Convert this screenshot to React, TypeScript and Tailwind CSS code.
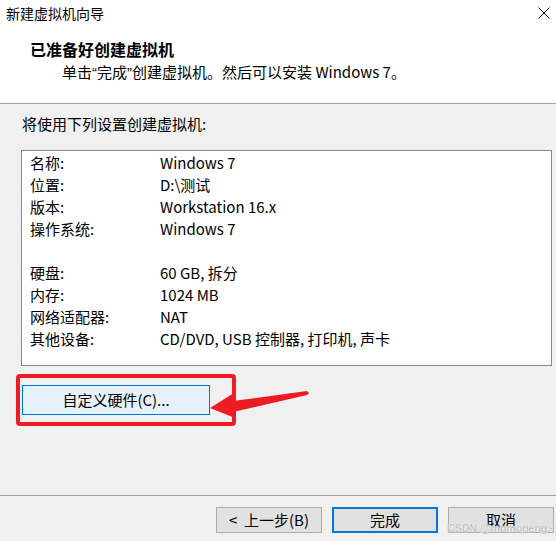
import React from 'react'

// ─── 数据 ─────────────────────────────────────────────────────────────────────

const ROWS: [string, string][] = [
  ['名称:', 'Windows 7'],
  ['位置:', 'D:\\测试'],
  ['版本:', 'Workstation 16.x'],
  ['操作系统:', 'Windows 7'],
  ['', ''],
  ['硬盘:', '60 GB, 拆分'],
  ['内存:', '1024 MB'],
  ['网络适配器:', 'NAT'],
  ['其他设备:', 'CD/DVD, USB 控制器, 打印机, 声卡'],
]

const Q = ({ c }: { c: string }) => <span className="font-['Liberation_Sans']">{c}</span>

// ─── App ──────────────────────────────────────────────────────────────────────

export default function App() {
  return (
    <div className="relative w-[556px] h-[541px] overflow-hidden bg-[#f0f0f0] text-black flex flex-col font-['Noto_Sans_CJK_SC',sans-serif]">
      {/* 头部 */}
      <div className="bg-white border-b border-[#a0a0a0] h-[104px] shrink-0 flex flex-col">
        <div className="h-[26px] flex items-center justify-between pl-[6px] pr-[6px]">
          <span className="text-[14px] leading-[20px]">新建虚拟机向导</span>
          <svg width="12" height="12" viewBox="0 0 12 12" className="text-black">
            <path d="M0.5 0.5 L11.5 11.5 M11.5 0.5 L0.5 11.5" stroke="currentColor" strokeWidth="1" fill="none" />
          </svg>
        </div>
        <div className="mt-[13px] pl-[30px] text-[16px] leading-[20px] font-bold">已准备好创建虚拟机</div>
        <div className="mt-[3px] pl-[62px] text-[15px] leading-[20px]">
          单击<Q c="“" />完成<Q c="”" />创建虚拟机。然后可以安装 Windows 7。
        </div>
      </div>

      {/* 内容 */}
      <div className="mt-[10px] pl-[22px] text-[15px] leading-[20px]">将使用下列设置创建虚拟机:</div>

      <div className="mt-[16px] ml-[21px] w-[531px] h-[216px] shrink-0 bg-white border border-[#828790] pt-[1px] pl-[8px]">
        {ROWS.map(([k, v], i) => (
          <div key={i} className="h-[22px] flex items-center text-[15px] leading-[22px]">
            <span className="w-[130px] shrink-0">{k}</span>
            <span>{v}</span>
          </div>
        ))}
      </div>

      <button
        type="button"
        className="mt-[19px] ml-[22px] w-[188px] h-[30px] shrink-0 bg-[#e5f1fb] border border-[#0078d7] text-[15px] leading-[20px] flex items-center justify-center"
      >
        自定义硬件(C)...
      </button>

      <div className="flex-1" />

      {/* 底部按钮 */}
      <div className="border-t border-[#a0a0a0] pt-[11px] pb-[8px] pr-[2px] flex justify-end gap-[10px] shrink-0">
        <button type="button" className="w-[106px] h-[26px] bg-[#e1e1e1] border border-[#adadad] text-[15px] leading-[20px] flex items-center justify-center whitespace-pre">
          {'<  上一步(B)'}
        </button>
        <button type="button" className="w-[106px] h-[26px] bg-[#e1e1e1] border-2 border-[#0078d7] text-[15px] leading-[20px] flex items-center justify-center">
          完成
        </button>
        <button type="button" className="w-[106px] h-[26px] bg-[#e1e1e1] border border-[#adadad] text-[15px] leading-[20px] flex items-center justify-center">
          取消
        </button>
      </div>

      {/* 标注：红框 + 箭头 */}
      <svg className="absolute inset-0 pointer-events-none" width="556" height="541" viewBox="0 0 556 541">
        <rect x="18" y="376" width="216" height="48" rx="2" fill="none" stroke="#ed1c24" strokeWidth="4" />
        <polygon
          points="210,408 234,393 233,401 307,391 309,393 307,395 233,412 235,418"
          fill="#ed1c24"
        />
      </svg>

      {/* 水印 */}
      <span className="absolute left-[447px] top-[521px] text-[11px] leading-[14px] font-bold tracking-[-0.3px] text-[#c4c4c4] font-['Liberation_Sans',sans-serif] whitespace-nowrap [text-shadow:0_0_1px_#fff,0_0_1px_#fff]">
        CSDN @momopeng~~
      </span>
    </div>
  )
}
